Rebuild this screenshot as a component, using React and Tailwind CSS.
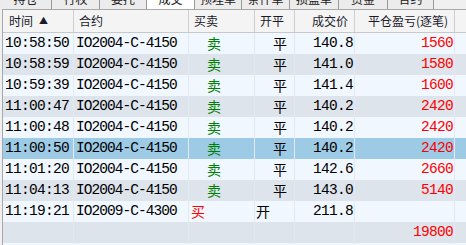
import React from "react";

const tabs = [
  { t: "持仓", w: "w-[52px]" },
  { t: "行权", w: "w-[48px]" },
  { t: "委托", w: "w-[47px]" },
  { t: "成交", w: "w-[48px]", sel: true },
  { t: "预埋单", w: "w-[47px]" },
  { t: "条件单", w: "w-[48px]" },
  { t: "损盈单", w: "w-[49px]" },
  { t: "资金", w: "w-[49px]" },
  { t: "合约", w: "w-[46px]" },
];

const rows = [
  ["10:58:50", "IO2004-C-4150", "卖", "平", "140.8", "1560"],
  ["10:58:59", "IO2004-C-4150", "卖", "平", "141.0", "1580"],
  ["10:59:39", "IO2004-C-4150", "卖", "平", "141.4", "1600"],
  ["11:00:47", "IO2004-C-4150", "卖", "平", "140.2", "2420"],
  ["11:00:48", "IO2004-C-4150", "卖", "平", "140.2", "2420"],
  ["11:00:50", "IO2004-C-4150", "卖", "平", "140.2", "2420"],
  ["11:01:20", "IO2004-C-4150", "卖", "平", "142.6", "2660"],
  ["11:04:13", "IO2004-C-4150", "卖", "平", "143.0", "5140"],
  ["11:19:21", "IO2009-C-4300", "买", "开", "211.8", ""],
];

const mono = { fontFamily: '"Liberation Mono", "DejaVu Sans Mono", monospace' };
const cjk = { fontFamily: '"Noto Sans CJK SC", "Noto Sans", sans-serif' };

const grid = "grid grid-cols-[71px_115px_66px_40px_60px_100px_1fr]";

export default function App() {
  return (
    <div className="w-[466px] h-[245px] overflow-hidden bg-[#f0f0f0]" style={cjk}>
      <div className="h-[9px] overflow-hidden">
        <div className="flex mt-[-11px] h-[20px]">
          {tabs.map((tb) => (
            <div
              key={tb.t}
              className={`${tb.w} h-[20px] flex items-center justify-center text-[12px] leading-none text-[#202020] border-r border-[#9a9a9a] ${
                tb.sel ? "bg-white" : "bg-[#ececec]"
              }`}
            >
              {tb.t}
            </div>
          ))}
        </div>
      </div>
      <div className="ml-[2px] border-l border-t border-[#a8a8a8] bg-[#f0f7ff]">
        <div className={`${grid} h-[23px] bg-[#f4f4f4] border-b border-[#c8c8c8] text-[12px] text-[#1a1a2a]`}>
          <div className="flex items-center pl-[6px] gap-[6px] border-r border-[#cfcfcf]">
            <span>时间</span>
            <span className="text-[9px]">▲</span>
          </div>
          <div className="flex items-center pl-[5px] border-r border-[#cfcfcf]">合约</div>
          <div className="flex items-center pl-[5px] border-r border-[#cfcfcf]">买卖</div>
          <div className="flex items-center pl-[5px] border-r border-[#cfcfcf]">开平</div>
          <div className="flex items-center justify-end pr-[6px] border-r border-[#cfcfcf]">成交价</div>
          <div className="flex items-center justify-end pr-[6px] border-r border-[#cfcfcf]">平仓盈亏(逐笔)</div>
          <div></div>
        </div>
        {rows.map((r, i) => {
          const bg = i === 5 ? "bg-[#9dcbe6]" : i % 2 === 1 ? "bg-[#dde4ec]" : "bg-[#f0f7ff]";
          const sell = r[2] === "卖";
          return (
            <div key={i} className={`${grid} h-[21px] ${bg} text-black`}>
              <div className="flex items-center pl-[2px] border-r border-[#e4e9ef] text-[14.5px] tracking-[-0.7px]" style={mono}>
                {r[0]}
              </div>
              <div className="flex items-center pl-[2px] border-r border-[#e4e9ef] text-[14.5px] tracking-[-0.95px]" style={mono}>
                {r[1]}
              </div>
              <div
                className={`flex items-center border-r border-[#e4e9ef] text-[14px] ${
                  sell ? "pl-[18px] text-[#008000]" : "pl-[2px] text-[#ff0000]"
                }`}
              >
                {r[2]}
              </div>
              <div className={`flex items-center border-r border-[#e4e9ef] text-[14px] ${sell ? "pl-[18px]" : "pl-[1px]"}`}>
                {r[3]}
              </div>
              <div className="flex items-center justify-end pr-[1px] border-r border-[#e4e9ef] text-[14.5px] tracking-[-0.7px]" style={mono}>
                {r[4]}
              </div>
              <div className="flex items-center justify-end pr-[1px] border-r border-[#e4e9ef] text-[14.5px] tracking-[-0.7px] text-[#ff0000]" style={mono}>
                {r[5]}
              </div>
              <div></div>
            </div>
          );
        })}
        <div className={`${grid} h-[21px] bg-[#dde4ec]`}>
          <div className="border-r border-[#e4e9ef]"></div>
          <div className="border-r border-[#e4e9ef]"></div>
          <div className="border-r border-[#e4e9ef]"></div>
          <div className="border-r border-[#e4e9ef]"></div>
          <div className="border-r border-[#e4e9ef]"></div>
          <div className="flex items-center justify-end pr-[1px] border-r border-[#e4e9ef] text-[14.5px] tracking-[-0.7px] text-[#ff0000]" style={mono}>
            19800
          </div>
          <div></div>
        </div>
        <div className="h-[10px] bg-[#f0f7ff]"></div>
      </div>
    </div>
  );
}
